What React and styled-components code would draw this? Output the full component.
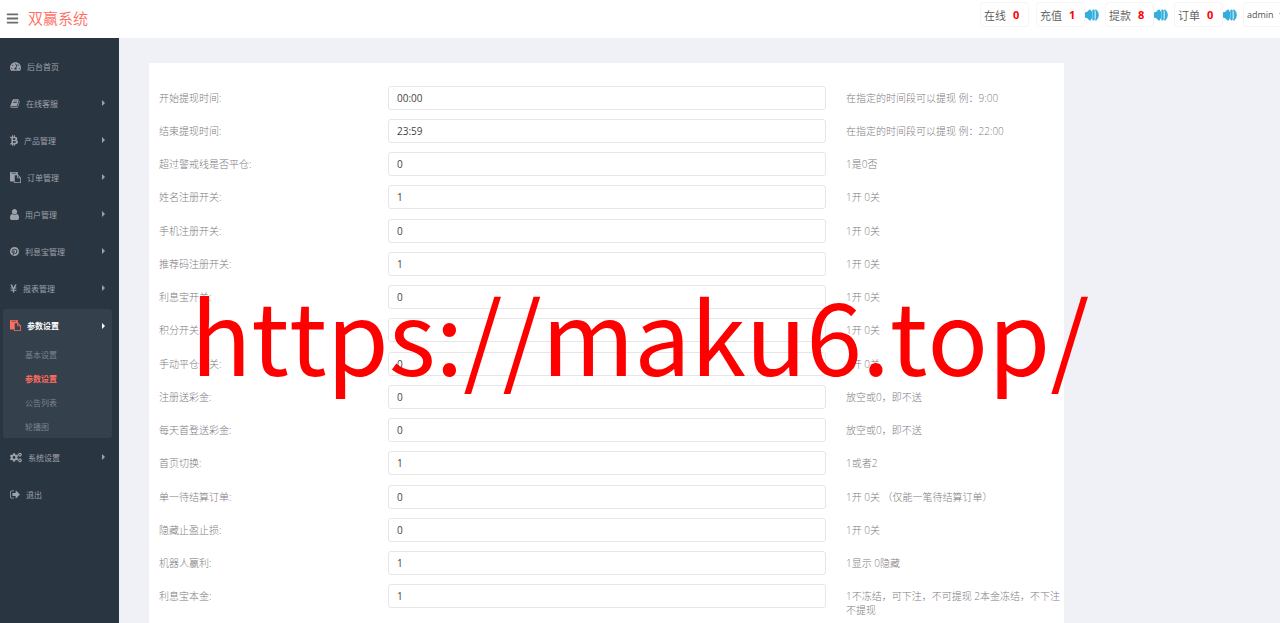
import React from "react";
import styled, { createGlobalStyle, css } from "styled-components";
import { FaTachometerAlt, FaBtc, FaPinterest, FaYenSign, FaCogs, FaBars } from "react-icons/fa";

const Global = createGlobalStyle`
  * { box-sizing: border-box; }
  body {
    margin: 0;
    background: #f0f1f7;
    color: #807a82;
    font-family: "Open Sans", "Noto Sans CJK SC", sans-serif;
    font-size: 10px;
    font-weight: 300;
  }
`;

const Page = styled.div`
  position: relative;
  display: flex;
  flex-direction: column;
  height: 100vh;
  overflow: hidden;
`;

const Header = styled.header`
  display: flex;
  flex: none;
  align-items: flex-start;
  justify-content: space-between;
  height: 38px;
  padding-left: 6px;
  background: #fff;
  overflow: hidden;
`;

const Brand = styled.div`
  display: flex;
  align-items: center;
  gap: 9px;
  height: 36px;
`;

const MenuButton = styled.button`
  display: flex;
  padding: 0;
  border: 0;
  background: none;
  color: #6d6d6d;
  font-size: 13px;
`;

const Title = styled.a`
  color: #ff6c60;
  font-size: 15px;
  font-weight: 350;
  line-height: 20px;
  text-decoration: none;
`;

const Stats = styled.div`
  display: flex;
  flex: none;
  gap: 7px;
  padding-top: 2px;
`;

const Stat = styled.div`
  display: flex;
  align-items: center;
  width: ${(p) => (p.$sound ? 62 : 49)}px;
  height: 25px;
`;

const StatBox = styled.a`
  display: flex;
  flex: none;
  align-items: center;
  gap: 7px;
  width: 49px;
  height: 25px;
  padding-left: 3px;
  border: 1px solid #f5f5f5;
  border-radius: 4px;
  color: #555;
  font-size: 11px;
  font-weight: 350;
  text-decoration: none;
  white-space: nowrap;
`;

const Count = styled.b`
  color: #f00;
  font-weight: 700;
`;

const Sound = styled.svg`
  flex: none;
  width: 14px;
  height: 12px;
  fill: #35aedb;
`;

const Account = styled.button`
  display: flex;
  align-items: center;
  gap: 5px;
  width: 37px;
  height: 25px;
  padding: 0 0 0 3px;
  border: 1px solid #f5f5f5;
  border-right: 0;
  border-radius: 4px 0 0 4px;
  background: none;
  color: #555;
  font: 400 9px "Open Sans", sans-serif;
  overflow: hidden;
`;

const Caret = styled.i`
  flex: none;
  border: 3px solid transparent;
  border-top-color: #777;
  border-bottom: 0;
`;

const Body = styled.div`
  display: flex;
  flex: 1;
  min-height: 0;
`;

const Sidebar = styled.nav`
  flex: none;
  width: 119px;
  padding: 10px 7px 0 3px;
  background: #2a3542;
  font-size: 8px;
  font-weight: 400;
`;

const Item = styled.a`
  display: flex;
  align-items: center;
  height: 36px;
  padding: 0 7px;
  color: #9da2a8;
  text-decoration: none;
  svg {
    flex: none;
    height: 11px;
    width: ${(p) => p.$icon}px;
    margin-right: 6px;
    fill: currentColor;
  }
  ${(p) =>
    p.$active &&
    css`
      height: 33px;
      color: #fff;
      font-weight: 700;
      svg { color: #ff6c60; }
    `}
`;

const Group = styled.div`
  margin-bottom: 1px;
  border-radius: 3px;
  ${(p) =>
    p.$open &&
    css`
      margin-top: 3px;
      background: #35404d;
    `}
`;

const Arrow = styled.i`
  margin-left: auto;
  border: 3px solid transparent;
  border-left-color: currentColor;
  border-right: 0;
`;

const SubItem = styled.a`
  display: flex;
  align-items: center;
  height: 24px;
  padding-left: 22px;
  color: ${(p) => (p.$active ? "#ff6c60" : "#7b838c")};
  font-weight: ${(p) => (p.$active ? 700 : 400)};
  text-decoration: none;
`;

const Main = styled.main`
  flex: 1;
  padding: 25px 216px 30px 30px;
  overflow-y: auto;
  scrollbar-width: none;
`;

const Panel = styled.form`
  padding: 23px 0 60px 10px;
  background: #fff;
`;

const Row = styled.div`
  display: grid;
  grid-template-columns: 229fr 458fr 218fr;
  align-items: start;
  min-height: 24px;
  margin-bottom: 9px;
  &:nth-child(4n) { margin-bottom: 10px; }
`;

const Label = styled.label`
  padding-top: 5px;
  line-height: 14px;
`;

const Field = styled.input`
  height: 24px;
  margin-right: 20px;
  padding: 0 8px;
  border: 1px solid #e6e6e8;
  border-radius: 3px;
  background: #fff;
  color: #444;
  font: 400 10px "Open Sans", sans-serif;
`;

const Hint = styled.span`
  padding-top: 5px;
  line-height: 14px;
`;

const Watermark = styled.div`
  position: absolute;
  top: 260px;
  left: 0;
  right: 0;
  color: #f00;
  font: 400 100px/145px "Noto Sans CJK SC", sans-serif;
  font-kerning: none;
  text-align: center;
  white-space: nowrap;
  pointer-events: none;
`;

const Glyph = ({ d, box = "0 0 1792 1792" }) => (
  <svg viewBox={box} aria-hidden="true">
    <path d={d} />
  </svg>
);

const BOOK =
  "M1703 478q40 57 18 129l-275 906q-19 64-76.5 107.5t-122.5 43.5h-923q-77 0-148.5-53.5t-99.5-131.5q-24-67-2-127 0-4 3-27t4-37q1-8-3-21.5t-3-19.5q2-11 8-21t16.5-23.5 16.5-23.5q23-38 45-91.5t30-91.5q3-10 .5-30t-.5-28q3-11 17-28t17-23q21-36 42-92t25-90q1-9-2.5-32t.5-28q4-13 22-30.5t22-22.5q19-26 42.5-84.5t27.5-96.5q1-8-3-25.5t-2-26.5q2-8 9-18t18-23 17-21q8-12 16.5-30.5t15-35 16-36 19.5-32 26.5-23.5 36-11.5 47.5 5.5l-1 3q38-9 51-9h761q74 0 114 56t18 130l-274 906q-36 119-71.5 153.5t-128.5 34.5h-869q-27 0-38 15-11 16-1 43 24 70 144 70h923q29 0 56-15.5t35-41.5l300-987q7-22 5-57 38 15 59 43zm-1064 2q-4 13 2 22.5t20 9.5h608q13 0 25.5-9.5t16.5-22.5l21-64q4-13-2-22.5t-20-9.5h-608q-13 0-25.5 9.5t-16.5 22.5zm-83 256q-4 13 2 22.5t20 9.5h608q13 0 25.5-9.5t16.5-22.5l21-64q4-13-2-22.5t-20-9.5h-608q-13 0-25.5 9.5t-16.5 22.5z";
const PASTE =
  "M768 1664h896v-640h-416q-40 0-68-28t-28-68v-416h-384v1152zm256-1440v-64q0-13-9.5-22.5t-22.5-9.5h-704q-13 0-22.5 9.5t-9.5 22.5v64q0 13 9.5 22.5t22.5 9.5h704q13 0 22.5-9.5t9.5-22.5zm256 672h299l-299-299v299zm512 128v672q0 40-28 68t-68 28h-960q-40 0-68-28t-28-68v-160h-544q-40 0-68-28t-28-68v-1344q0-40 28-68t68-28h1088q40 0 68 28t28 68v328q21 13 36 28l408 408q28 28 48 76t20 88z";
const USER =
  "M1536 1399q0 109-62.5 187t-150.5 78h-854q-88 0-150.5-78t-62.5-187q0-85 8.5-160.5t31.5-152 58.5-131 94-89 134.5-34.5q131 128 313 128t313-128q76 0 134.5 34.5t94 89 58.5 131 31.5 152 8.5 160.5zm-256-887q0 159-112.5 271.5t-271.5 112.5-271.5-112.5-112.5-271.5 112.5-271.5 271.5-112.5 271.5 112.5 112.5 271.5z";
const SIGN_OUT =
  "M640 1440q0 4 1 20t.5 26.5-3 23.5-10 19.5-20.5 6.5h-320q-119 0-203.5-84.5t-84.5-203.5v-704q0-119 84.5-203.5t203.5-84.5h320q13 0 22.5 9.5t9.5 22.5q0 4 1 20t.5 26.5-3 23.5-10 19.5-20.5 6.5h-320q-66 0-113 47t-47 113v704q0 66 47 113t113 47h312l11.5 1 11.5 3 8 5.5 7 9 2 13.5zm928-544q0 26-19 45l-544 544q-19 19-45 19t-45-19-19-45v-288h-448q-26 0-45-19t-19-45v-384q0-26 19-45t45-19h448v-288q0-26 19-45t45-19 45 19l544 544q19 19 19 45z";

const menu = [
  { text: "后台首页", icon: <FaTachometerAlt />, width: 11, leaf: true },
  { text: "在线客服", icon: <Glyph d={BOOK} />, width: 10 },
  { text: "产品管理", icon: <FaBtc />, width: 8 },
  { text: "订单管理", icon: <Glyph d={PASTE} />, width: 11 },
  { text: "用户管理", icon: <Glyph d={USER} box="256 128 1280 1536" />, width: 9 },
  { text: "利息宝管理", icon: <FaPinterest />, width: 9 },
  { text: "报表管理", icon: <FaYenSign />, width: 7 },
  {
    text: "参数设置",
    icon: <Glyph d={PASTE} />,
    width: 11,
    active: true,
    children: ["基本设置", "参数设置", "公告列表", "轮播图"],
  },
  { text: "系统设置", icon: <FaCogs />, width: 12 },
  { text: "退出", icon: <Glyph d={SIGN_OUT} box="0 128 1600 1536" />, width: 10, leaf: true },
];

const stats = [
  { text: "在线", count: 0 },
  { text: "充值", count: 1, sound: true },
  { text: "提款", count: 8, sound: true },
  { text: "订单", count: 0, sound: true },
];

const fields = [
  ["开始提现时间:", "00:00", "在指定的时间段可以提现 例：9:00"],
  ["结束提现时间:", "23:59", "在指定的时间段可以提现 例：22:00"],
  ["超过警戒线是否平仓:", "0", "1是0否"],
  ["姓名注册开关:", "1", "1开 0关"],
  ["手机注册开关:", "0", "1开 0关"],
  ["推荐码注册开关:", "1", "1开 0关"],
  ["利息宝开关:", "0", "1开 0关"],
  ["积分开关:", "0", "1开 0关"],
  ["手动平仓开关:", "0", "1开 0关"],
  ["注册送彩金:", "0", "放空或0，即不送"],
  ["每天首登送彩金:", "0", "放空或0，即不送"],
  ["首页切换:", "1", "1或者2"],
  ["单一待结算订单:", "0", "1开 0关 （仅能一笔待结算订单）"],
  ["隐藏止盈止损:", "0", "1开 0关"],
  ["机器人赢利:", "1", "1显示 0隐藏"],
  ["利息宝本金:", "1", "1不冻结，可下注，不可提现 2本金冻结，不下注不提现"],
];

export default function App() {
  return (
    <Page>
      <Global />
      <Header>
        <Brand>
          <MenuButton type="button" aria-label="菜单"><FaBars /></MenuButton>
          <Title href="#">双赢系统</Title>
        </Brand>
        <Stats>
          {stats.map((s) => (
            <Stat key={s.text} $sound={s.sound}>
              <StatBox href="#">
                {s.text}
                <Count>{s.count}</Count>
              </StatBox>
              {s.sound && (
                <Sound viewBox="0 0 14 12" aria-hidden="true">
                  <path d="M0 4Q0 3 1 3H2L4 1Q5 0 6 1V11Q5 12 4 11L2 9H1Q0 9 0 8z" />
                  <path d="M6 2.500L7 2V10L6 9.500z" />
                  <path d="M7.300 1Q9 0 9.700 1.500V10.500Q9 12 7.300 11z" />
                  <path d="M10 .5Q12 0 12.300 2Q14 3 13.500 5L14 6L13.500 7Q14 9 12.300 10Q12 12 10 11.500L10.600 9V3z" />
                </Sound>
              )}
            </Stat>
          ))}
          <Account type="button">admin<Caret /></Account>
        </Stats>
      </Header>
      <Body>
        <Sidebar>
          {menu.map((m, i) => (
            <Group key={i} $open={!!m.children}>
              <Item href="#" $icon={m.width} $active={m.active}>
                {m.icon}
                {m.text}
                {!m.leaf && <Arrow />}
              </Item>
              {m.children?.map((c) => (
                <SubItem href="#" key={c} $active={c === m.text}>{c}</SubItem>
              ))}
            </Group>
          ))}
        </Sidebar>
        <Main>
          <Panel>
            {fields.map(([label, value, hint], i) => (
              <Row key={label}>
                <Label htmlFor={`f${i}`}>{label}</Label>
                <Field id={`f${i}`} defaultValue={value} />
                <Hint>{hint}</Hint>
              </Row>
            ))}
          </Panel>
        </Main>
      </Body>
      <Watermark>https://maku6.top/</Watermark>
    </Page>
  );
}
